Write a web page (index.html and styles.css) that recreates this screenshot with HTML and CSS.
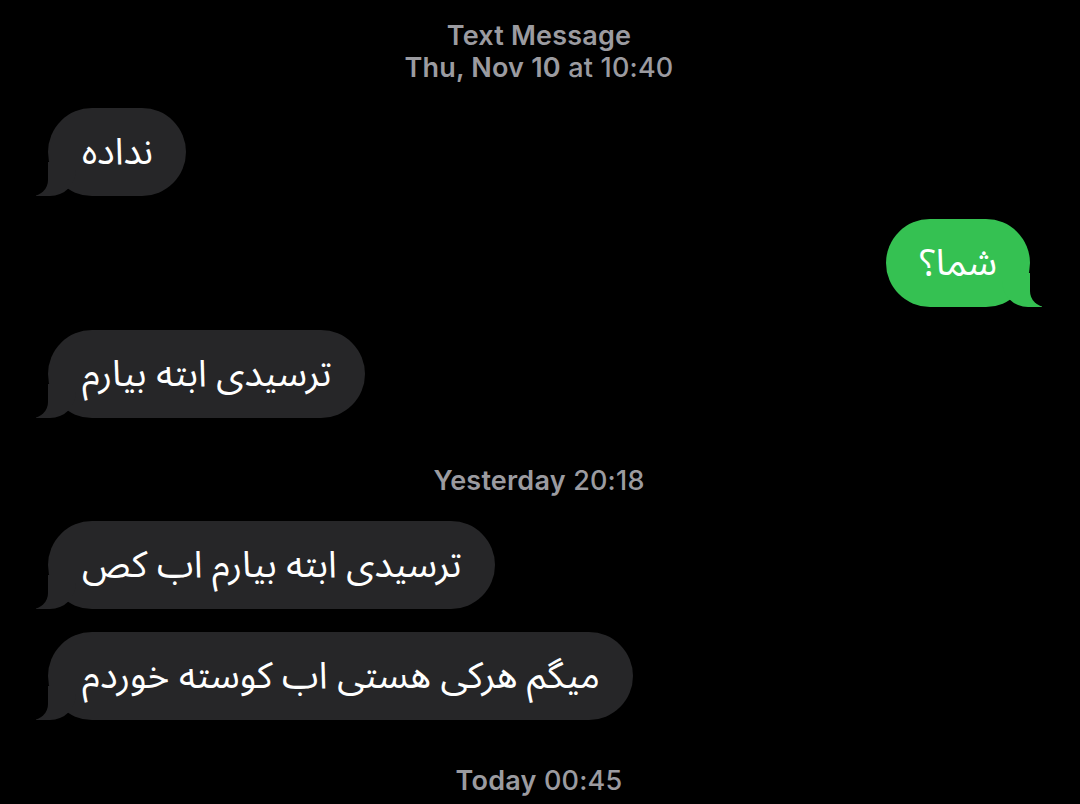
FILE: index.html
```html
<!DOCTYPE html>
<html lang="en">
<head>
<meta charset="utf-8">
<title>Messages</title>
<link rel="stylesheet" href="styles.css">
</head>
<body>
<main class="thread">
  <div class="stamp first">
    <div class="service">Text Message</div>
    <div><b>Thu, Nov 10</b> at 10:40</div>
  </div>

  <div class="bubble in" dir="rtl">نداده</div>
  <div class="bubble out" dir="rtl">شما؟</div>
  <div class="bubble in" dir="rtl">ترسیدی ابته بیارم</div>

  <div class="stamp"><b>Yesterday</b> 20:18</div>

  <div class="bubble in" dir="rtl">ترسیدی ابته بیارم اب کص</div>
  <div class="bubble in" dir="rtl">میگم هرکی هستی اب کوسته خوردم</div>

  <div class="stamp last"><b>Today</b> 00:45</div>
</main>
</body>
</html>
```

FILE: styles.css
```css
html, body {
  margin: 0;
  padding: 0;
  background: #000;
}

body {
  width: 1080px;
  height: 804px;
  overflow: hidden;
}

.thread {
  display: flex;
  flex-direction: column;
  align-items: flex-start;
  padding: 20px 50px 0 48px;
}

/* timestamps between message groups */
.stamp {
  align-self: center;
  text-align: center;
  color: #9b9ba0;
  font-family: "Inter", "Liberation Sans", sans-serif;
  font-size: 27px;
  line-height: 32px;
  font-weight: 500;
  letter-spacing: 0.2px;
  margin: 24px 0 24px;
}
.stamp b,
.stamp .service {
  font-weight: 600;
}
.stamp.first {
  margin: 0 0 24px;
}
.stamp.last {
  margin-top: 22px;
}

/* chat bubbles */
.bubble {
  position: relative;
  box-sizing: border-box;
  height: 88px;
  padding: 0 33px 0 34px;
  border-radius: 44px;
  display: flex;
  align-items: center;
  font-family: "Noto Sans Arabic", "DejaVu Sans", sans-serif;
  font-size: 37px;
  line-height: 40px;
  color: #fff;
  margin-bottom: 23px;
}
.bubble.in {
  background: #262628;
}
.bubble.out {
  align-self: flex-end;
  background: #35c152;
}

/* the little tail in the bottom corner */
.bubble::before,
.bubble::after {
  content: "";
  position: absolute;
  bottom: 0;
  height: 34px;
}
.bubble.in::before {
  left: -12px;
  width: 40px;
  background: #262628;
  border-bottom-right-radius: 26px;
}
.bubble.in::after {
  left: -22px;
  width: 22px;
  background: #000;
  border-bottom-right-radius: 16px;
}
.bubble.out::before {
  right: -12px;
  width: 40px;
  background: #35c152;
  border-bottom-left-radius: 26px;
}
.bubble.out::after {
  right: -22px;
  width: 22px;
  background: #000;
  border-bottom-left-radius: 16px;
}
```
